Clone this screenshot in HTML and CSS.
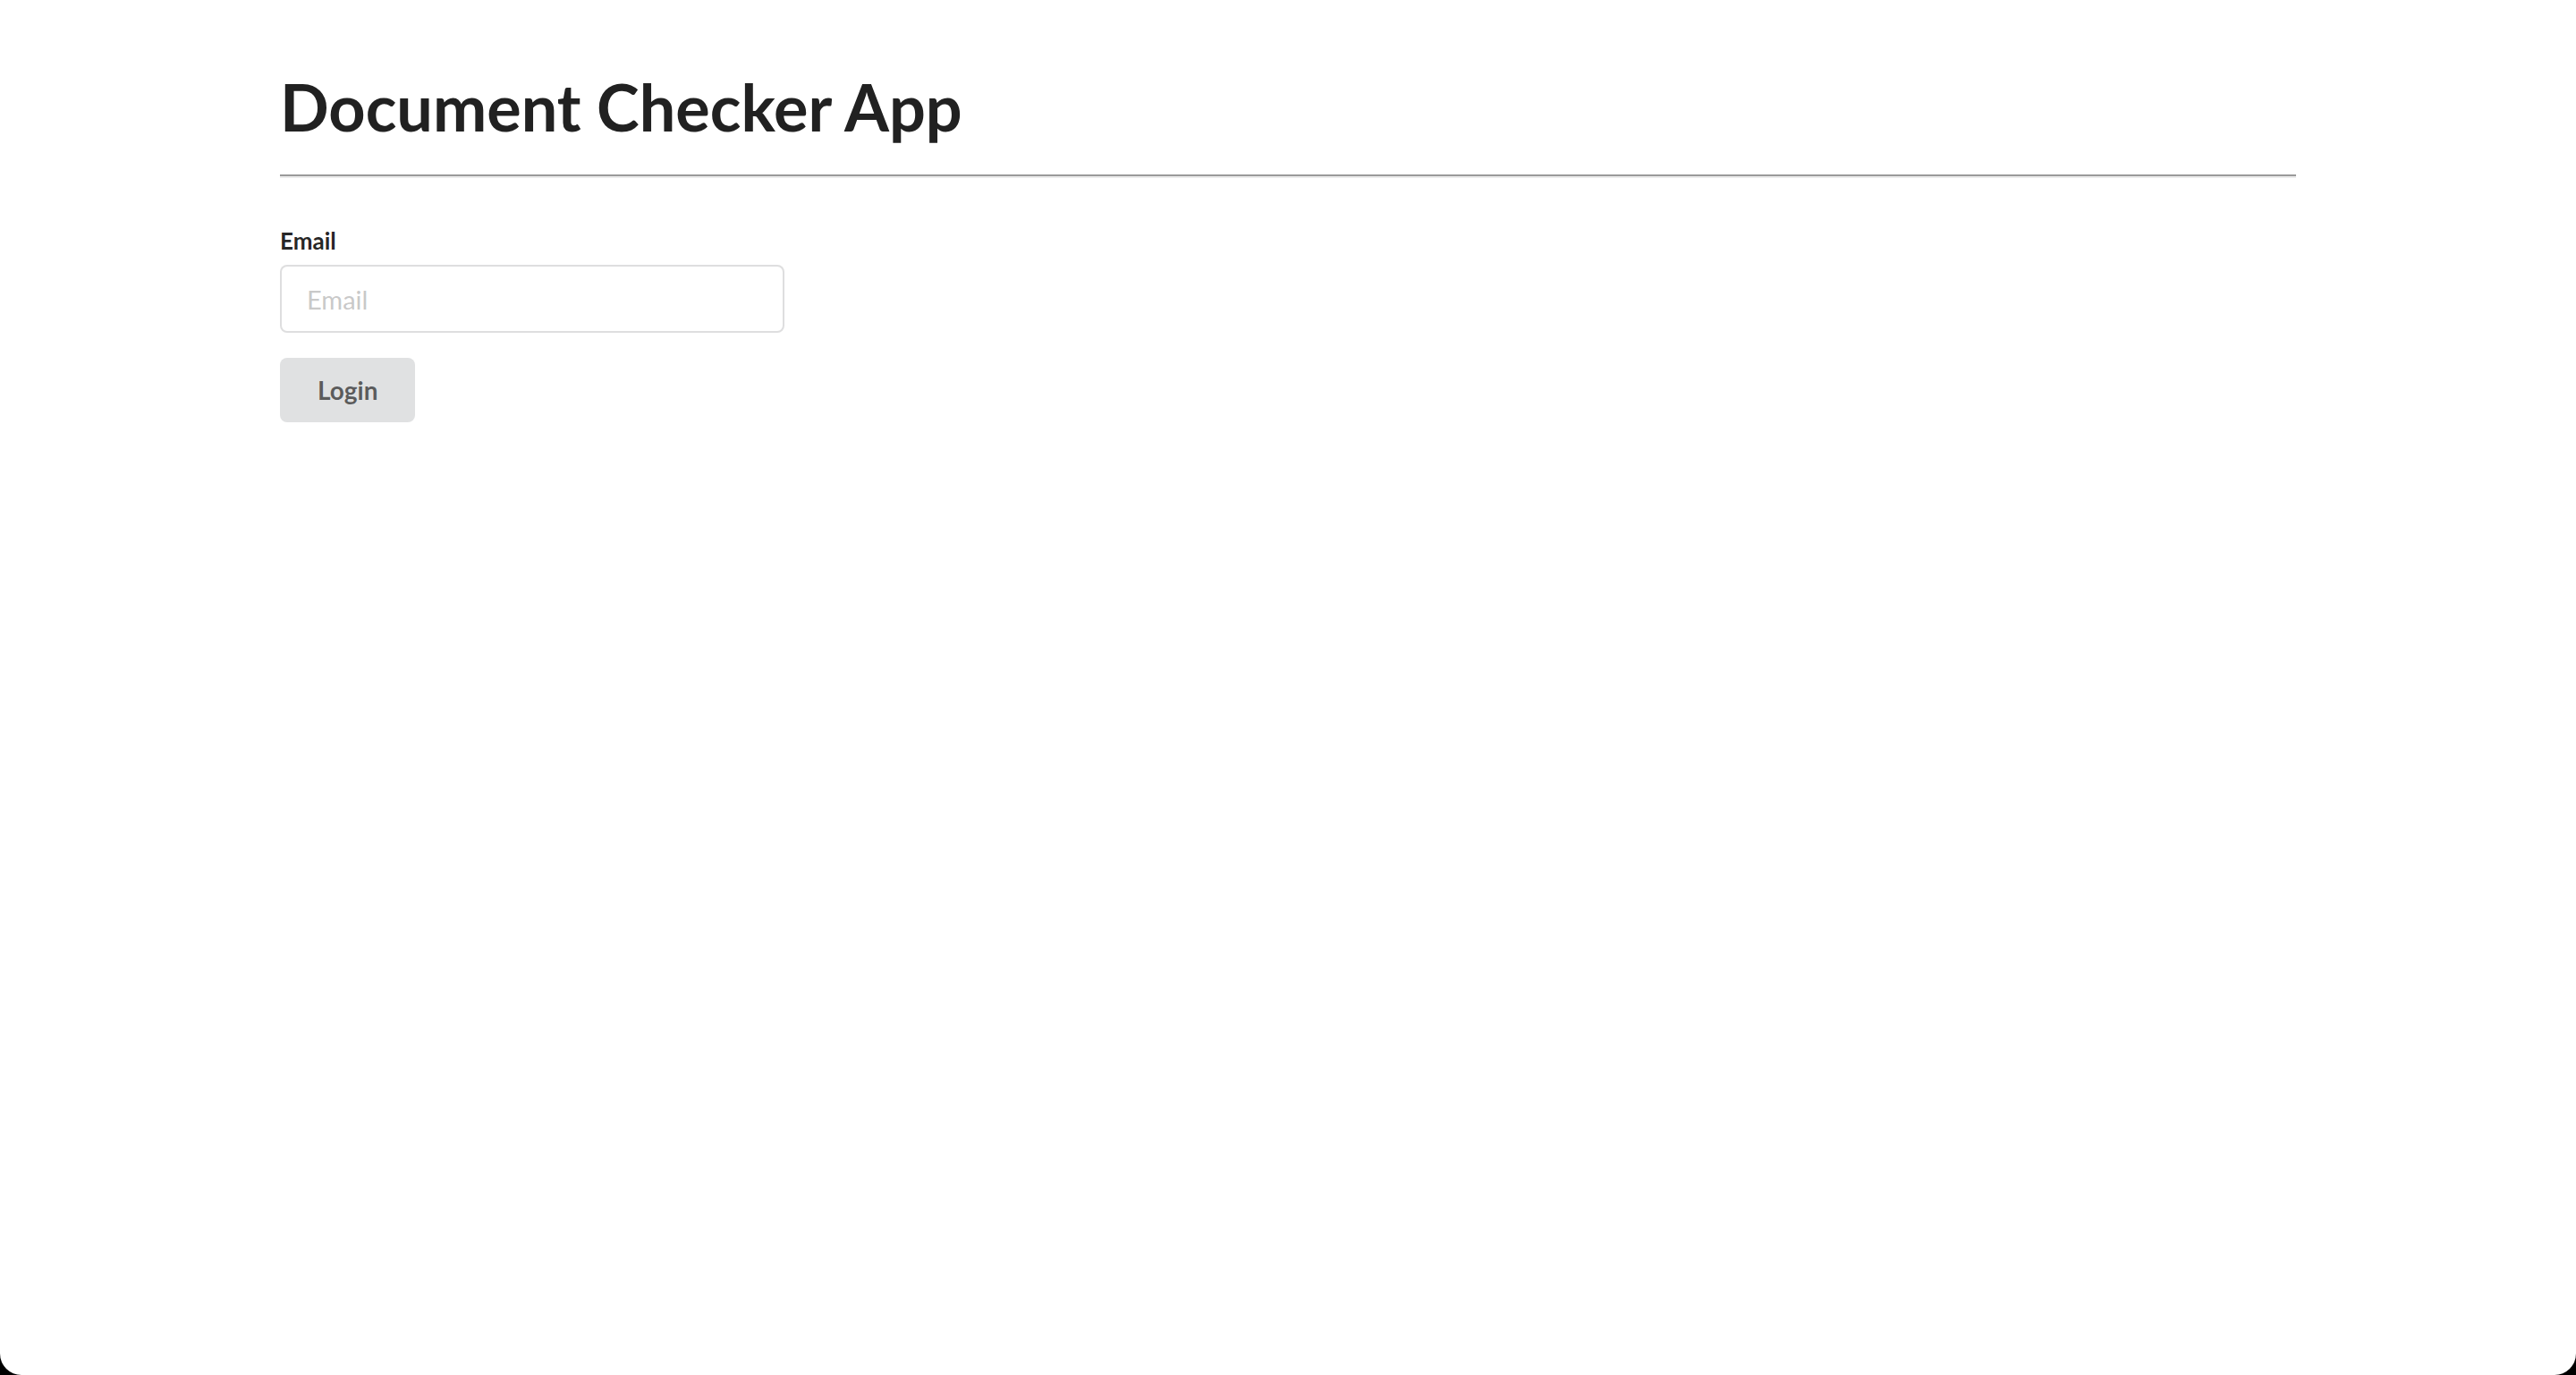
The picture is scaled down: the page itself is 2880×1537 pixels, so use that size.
FILE: index.html
```html
<!DOCTYPE html>
<html lang="en">
<head>
<meta charset="utf-8">
<title>Document Checker App</title>
<link rel="stylesheet" href="styles.css">
</head>
<body>
<div class="window">
  <div class="container">
    <h1 class="title">Document Checker App</h1>
    <hr class="divider">
    <form class="form">
      <div class="field">
        <label class="label" for="email">Email</label>
        <input class="input" id="email" type="text" placeholder="Email">
      </div>
      <button class="button" type="button">Login</button>
    </form>
  </div>
</div>
</body>
</html>
```
FILE: styles.css
```css
html, body {
  margin: 0;
  padding: 0;
  background: #000;
}
body {
  font-family: Lato, "Helvetica Neue", Arial, sans-serif;
  font-size: 28px;
  line-height: 1.4285em;
  color: rgba(0, 0, 0, 0.87);
}
.window {
  background: #fff;
  min-height: 100vh;
  border-radius: 0 0 24px 24px;
  overflow: hidden;
}
.container {
  width: 2254px;
  margin: 0 auto;
  padding-top: 72px;
}
.title {
  margin: 0;
  font-size: 72px;
  font-weight: 700;
  line-height: 95px;
  color: #212121;
}
.divider {
  margin: 28px 0 0;
  height: 0;
  border: 0;
  border-top: 2px solid #9a9a9a;
  border-bottom: 2px solid #ececec;
}
.form {
  margin-top: 52px;
}
.field {
  display: flex;
  flex-direction: column;
  align-items: flex-start;
}
.label {
  font-size: 26px;
  font-weight: 700;
  line-height: 37px;
  color: rgba(0, 0, 0, 0.87);
  margin-bottom: 8px;
}
.input {
  box-sizing: border-box;
  width: 564px;
  height: 76px;
  margin: 0;
  padding: 19px 28px;
  font-family: Lato, sans-serif;
  font-size: 29px;
  line-height: 34px;
  color: rgba(0, 0, 0, 0.87);
  background: #fff;
  border: 2px solid rgba(34, 36, 38, 0.15);
  border-radius: 8px;
  outline: none;
}
.input::placeholder {
  color: rgba(191, 191, 191, 0.87);
}
.button {
  margin-top: 28px;
  height: 72px;
  padding: 0 42px;
  font-family: Lato, sans-serif;
  font-size: 28px;
  font-weight: 700;
  line-height: 28px;
  color: rgba(0, 0, 0, 0.6);
  background: #e0e1e2;
  border: 0;
  border-radius: 8px;
  cursor: pointer;
}
```
